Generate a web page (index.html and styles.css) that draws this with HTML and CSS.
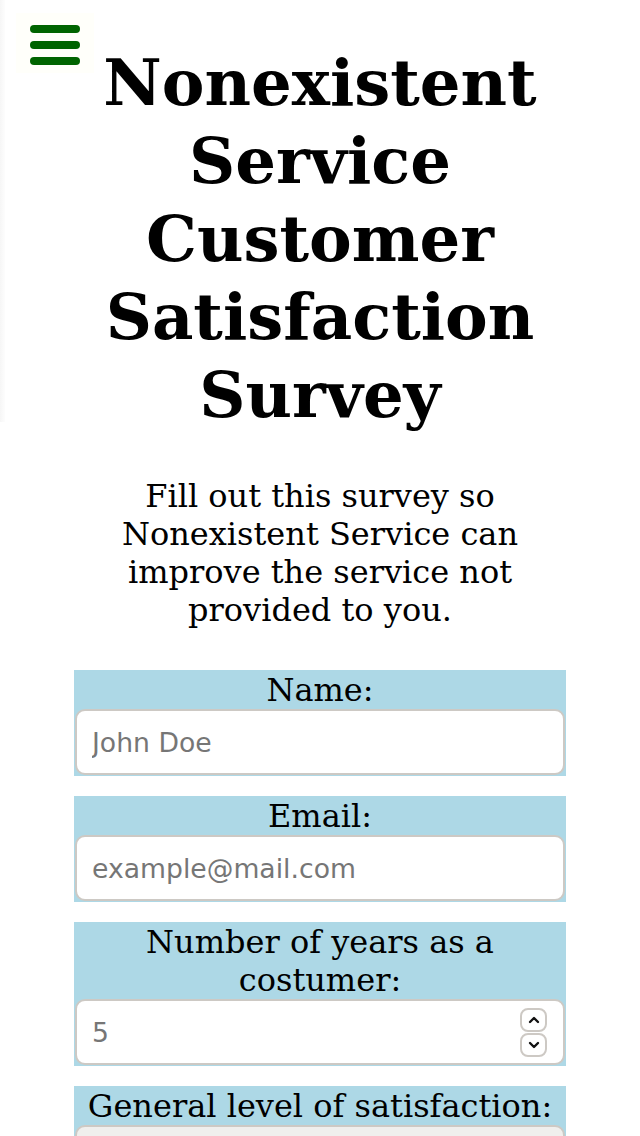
FILE: index.html
```html
<!DOCTYPE html>
<html lang="en">
<head>
<meta charset="utf-8">
<title>Nonexistent Service Customer Satisfaction Survey</title>
<link rel="stylesheet" href="styles.css">
</head>
<body>
<div class="edge"></div>
<nav class="menu">
  <button class="menu-btn" type="button" aria-label="Menu">
    <span class="bar"></span>
    <span class="bar"></span>
    <span class="bar"></span>
  </button>
</nav>
<header class="head">
  <h1 class="title">Nonexistent Service Customer Satisfaction Survey</h1>
  <p class="intro">Fill out this survey so Nonexistent Service can improve the service not provided to you.</p>
</header>
<form class="survey">
  <div class="field">
    <label class="field-label" for="name">Name:</label>
    <input class="text-input" id="name" type="text" placeholder="John Doe">
  </div>
  <div class="field">
    <label class="field-label" for="email">Email:</label>
    <input class="text-input" id="email" type="text" placeholder="example@mail.com">
  </div>
  <div class="field">
    <label class="field-label" for="years">Number of years as a costumer:</label>
    <div class="number-box">
      <input class="number-input" id="years" type="text" placeholder="5">
      <div class="spinner">
        <span class="spin-btn"><svg width="14" height="10" viewBox="0 0 14 10"><path d="M3 7 L7 3 L11 7" fill="none" stroke="#111" stroke-width="2.4" stroke-linecap="round" stroke-linejoin="round"/></svg></span>
        <span class="spin-btn"><svg width="14" height="10" viewBox="0 0 14 10"><path d="M3 3 L7 7 L11 3" fill="none" stroke="#111" stroke-width="2.4" stroke-linecap="round" stroke-linejoin="round"/></svg></span>
      </div>
    </div>
  </div>
  <div class="field">
    <label class="field-label" for="level">General level of satisfaction:</label>
    <div class="select-box" id="level"></div>
  </div>
</form>
</body>
</html>
```
FILE: styles.css
```css
html, body {
  margin: 0;
  padding: 0;
  background: #ffffff;
}

body {
  font-family: "DejaVu Serif", serif;
  color: #000;
}

.edge {
  position: absolute;
  left: 0;
  top: 0;
  width: 5px;
  height: 422px;
  background: linear-gradient(to right, #f6f6f6, #fdfdfd);
}

.menu {
  position: absolute;
  left: 16px;
  top: 13px;
}

.menu-btn {
  display: flex;
  flex-direction: column;
  gap: 8px;
  padding: 12px 14px 8px 14px;
  margin: 0;
  border: none;
  background: #fffffa;
}

.bar {
  display: block;
  width: 50px;
  height: 8px;
  border-radius: 4px;
  background: #006400;
}

.head {
  display: flex;
  flex-direction: column;
  align-items: center;
}

.title {
  margin: 44px 0 0 0;
  padding: 0 40px;
  font-size: 64px;
  line-height: 78px;
  font-weight: bold;
  text-align: center;
}

.intro {
  width: 448px;
  margin: 43px 0 0 0;
  font-size: 32px;
  line-height: 38px;
  text-align: center;
}

.survey {
  width: 492px;
  margin: 41px auto 0 auto;
  display: flex;
  flex-direction: column;
  gap: 20px;
}

.field {
  background: #add8e6;
  padding: 1px;
  display: flex;
  flex-direction: column;
}

.field-label {
  display: block;
  text-align: center;
  font-size: 32px;
  line-height: 38px;
}

.text-input,
.number-box,
.select-box {
  box-sizing: border-box;
  width: 100%;
  height: 66px;
  border: 2px solid #cdc9c4;
  border-radius: 10px;
  background: #fff;
}

.text-input {
  display: block;
  margin: 0;
  padding: 0 15px;
  font-family: "DejaVu Sans", sans-serif;
  font-size: 26.67px;
  color: #222;
  outline: none;
}

.text-input::placeholder,
.number-input::placeholder {
  color: #767676;
}

.number-box {
  display: flex;
  align-items: center;
  padding: 0 16px 0 15px;
}

.number-input {
  flex: 1;
  min-width: 0;
  border: none;
  padding: 0;
  margin: 0;
  background: transparent;
  font-family: "DejaVu Sans", sans-serif;
  font-size: 26.67px;
  outline: none;
}

.spinner {
  display: flex;
  flex-direction: column;
  gap: 1px;
}

.spin-btn {
  box-sizing: border-box;
  width: 27px;
  height: 24px;
  border: 2px solid #cdc9c4;
  border-radius: 8px;
  background: #fff;
  display: flex;
  align-items: center;
  justify-content: center;
}

.select-box {
  background: #f0efed;
}
```
